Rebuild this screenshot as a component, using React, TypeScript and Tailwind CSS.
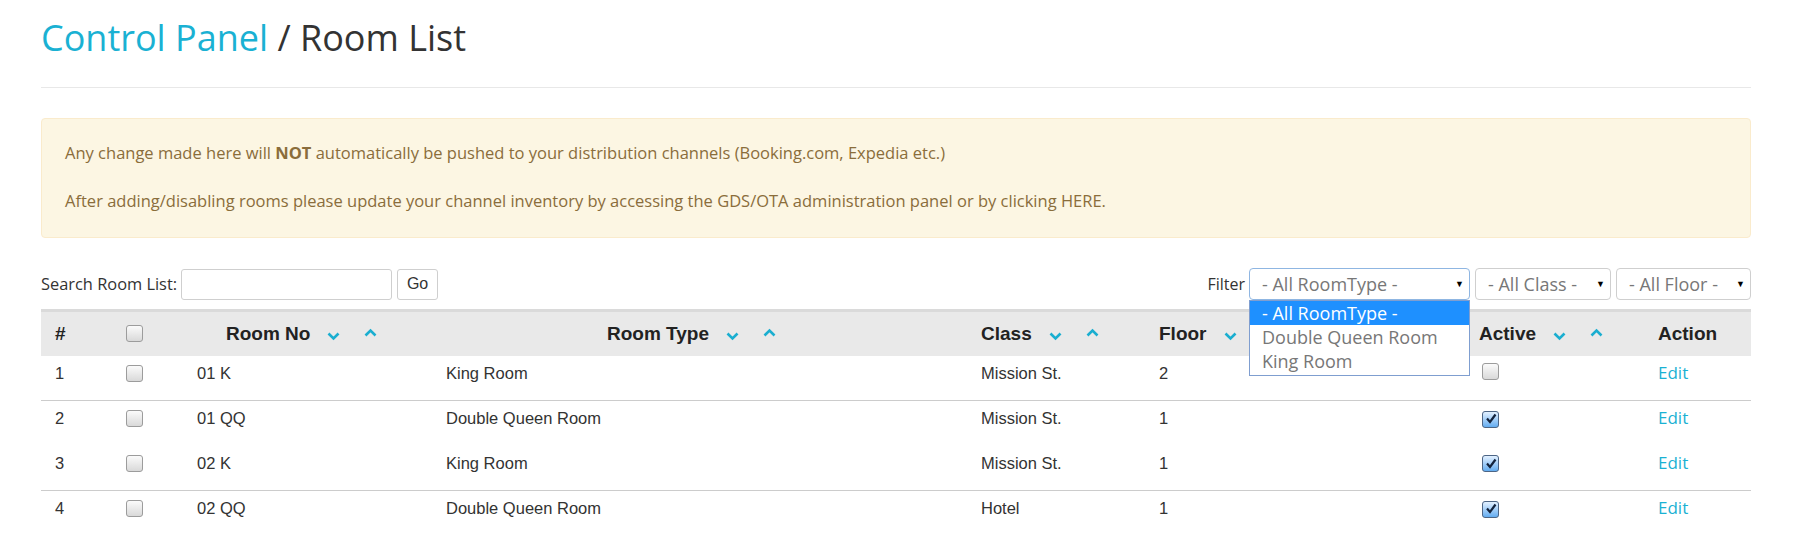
import { ReactNode } from 'react'

const rooms = [
  { id: 1, no: '01 K', type: 'King Room', cls: 'Mission St.', floor: '2', active: false, line: true },
  { id: 2, no: '01 QQ', type: 'Double Queen Room', cls: 'Mission St.', floor: '1', active: true, line: false },
  { id: 3, no: '02 K', type: 'King Room', cls: 'Mission St.', floor: '1', active: true, line: true },
  { id: 4, no: '02 QQ', type: 'Double Queen Room', cls: 'Hotel', floor: '1', active: true, line: false },
]

function SortArrows() {
  return (
    <>
      <svg width="13" height="9" viewBox="0 0 13 9" className="ml-[17px] translate-y-[3px]">
        <path d="M1.5 1.5 L6.5 6.5 L11.5 1.5" fill="none" stroke="#1aaed0" strokeWidth="2.6" />
      </svg>
      <svg width="13" height="9" viewBox="0 0 13 9" className="ml-[24px] -translate-y-[1px]">
        <path d="M1.5 7.5 L6.5 2.5 L11.5 7.5" fill="none" stroke="#1aaed0" strokeWidth="2.6" />
      </svg>
    </>
  )
}

function Box({ checked }: { checked?: boolean }) {
  if (checked) {
    return (
      <span className="inline-flex w-[17px] h-[17px] rounded-[3px] border border-[#4d6585] bg-linear-to-b from-[#e3f1ff] to-[#62acf0] items-center justify-center">
        <svg width="12" height="12" viewBox="0 0 12 12">
          <path d="M2 5.5 L5 9 L10.5 1.5" fill="none" stroke="#13233d" strokeWidth="2.2" />
        </svg>
      </span>
    )
  }
  return <span className="inline-block w-[17px] h-[17px] rounded-[3px] border border-[#9c9c9c] bg-linear-to-b from-[#fbfbfb] to-[#d9d9d9]" />
}

function Th({ children, className = '' }: { children?: ReactNode; className?: string }) {
  return (
    <th className={`border-t-[3px] border-[#dadada] bg-[#e9e9e9] h-[45px] px-2 text-left font-bold text-[19px] text-[#222] ${className}`}>
      <div className="flex items-center">{children}</div>
    </th>
  )
}

function Select({ label, width, focus }: { label: string; width: string; focus?: boolean }) {
  return (
    <div
      className={`${width} h-[32px] rounded-[4px] border ${focus ? 'border-[#8fb6e2]' : 'border-[#cfcfcf]'} bg-white flex items-center justify-between pl-[12px] pr-[5px] text-[18px] text-[#777]`}
    >
      <span>{label}</span>
      <span className="text-[9px] text-black">▼</span>
    </div>
  )
}

export default function App() {
  return (
    <div className="min-h-screen bg-white pl-[41px] pr-[46px] font-['Open_Sans',sans-serif] text-[#333]">
      {/* Title */}
      <h1 className="pt-[18px] text-[36px] leading-[40px]">
        <span className="text-[#1ab1d3]">Control Panel</span> / Room List
      </h1>
      <hr className="mt-[29px] border-t border-[#e8e8e8]" />

      {/* Warning */}
      <div className="mt-[30px] rounded-[4px] border border-[#faebcc] bg-[#fcf6e3] px-[23px] pt-[24px] pb-[26px] text-[16.5px] leading-[20px] text-[#8a6d3b]">
        <p>
          Any change made here will <b>NOT</b> automatically be pushed to your distribution channels (Booking.com, Expedia etc.)
        </p>
        <p className="mt-[28px]">
          After adding/disabling rooms please update your channel inventory by accessing the GDS/OTA administration panel or by clicking HERE.
        </p>
      </div>

      {/* Search and filters */}
      <div className="mt-[30px] flex items-center justify-between h-[32px]">
        <div className="flex items-center text-[16.4px]">
          <span>Search Room List:</span>
          <input className="ml-[4px] w-[211px] h-[31px] rounded-[3px] border border-[#cfcfcf] px-2 outline-none" />
          <button className="ml-[5px] w-[41px] h-[31px] rounded-[3px] border border-[#cfcfcf] bg-white font-['Liberation_Sans',Arial,sans-serif] text-[16px] text-[#333]">
            Go
          </button>
        </div>
        <div className="flex items-center text-[16px]">
          <span className="mr-[4px]">Filter</span>
          <div className="relative">
            <Select label="- All RoomType -" width="w-[221px]" focus />
            <div className="absolute left-0 top-[32px] z-10 w-[221px] border border-[#7f9ed0] bg-white pb-[2px] text-[18px] text-[#777]">
              <div className="h-[24px] leading-[24px] bg-[#1e90ff] text-white pl-[12px]">- All RoomType -</div>
              <div className="h-[24px] leading-[24px] pl-[12px]">Double Queen Room</div>
              <div className="h-[24px] leading-[24px] pl-[12px]">King Room</div>
            </div>
          </div>
          <div className="ml-[5px]">
            <Select label="- All Class -" width="w-[136px]" />
          </div>
          <div className="ml-[5px]">
            <Select label="- All Floor -" width="w-[135px]" />
          </div>
        </div>
      </div>

      {/* Table */}
      <table className="mt-[9px] w-full table-fixed border-collapse font-['Liberation_Sans',Arial,sans-serif]">
        <colgroup>
          <col className="w-[77px]" />
          <col className="w-[71px]" />
          <col className="w-[249px]" />
          <col className="w-[535px]" />
          <col className="w-[178px]" />
          <col className="w-[320px]" />
          <col className="w-[179px]" />
          <col className="w-[101px]" />
        </colgroup>
        <thead>
          <tr>
            <Th className="pl-[14px]">#</Th>
            <Th>
              <Box />
            </Th>
            <Th className="pl-[37px]">
              Room No
              <SortArrows />
            </Th>
            <Th className="pl-[169px]">
              Room Type
              <SortArrows />
            </Th>
            <Th>
              Class
              <SortArrows />
            </Th>
            <Th>
              Floor
              <SortArrows />
            </Th>
            <Th>
              Active
              <SortArrows />
            </Th>
            <Th>Action</Th>
          </tr>
        </thead>
        <tbody className="text-[16.5px] text-[#333]">
          {rooms.map((r) => {
            const td = `h-[45px] px-2 pt-[6px] align-top leading-[22px] ${r.line ? 'border-b border-[#cccccc]' : ''}`
            return (
              <tr key={r.id}>
                <td className={`${td} pl-[14px]`}>{r.id}</td>
                <td className={td}>
                  <div className="pt-[3px]">
                    <Box />
                  </div>
                </td>
                <td className={td}>{r.no}</td>
                <td className={td}>{r.type}</td>
                <td className={td}>{r.cls}</td>
                <td className={td}>{r.floor}</td>
                <td className={`${td} pl-[11px]`}>
                  <div className="pt-[1px]">
                    <Box checked={r.active} />
                  </div>
                </td>
                <td className={td}>
                  <a href="#" className="font-['Open_Sans',sans-serif] text-[17px] text-[#1ab1d3]">
                    Edit
                  </a>
                </td>
              </tr>
            )
          })}
        </tbody>
      </table>
    </div>
  )
}
